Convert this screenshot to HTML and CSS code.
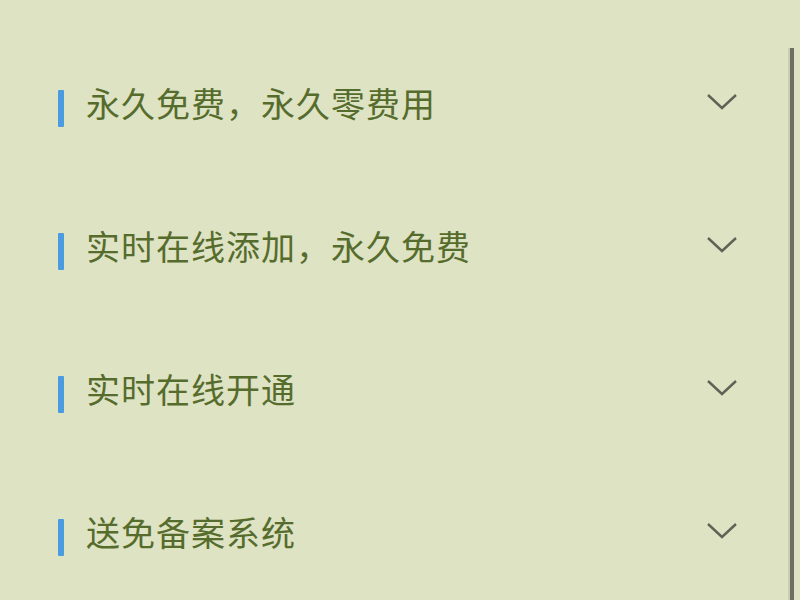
FILE: index.html
```html
<!DOCTYPE html>
<html lang="zh-CN">
<head>
    <meta charset="UTF-8">
    <meta name="viewport" content="width=device-width, initial-scale=1.0">
    <title>服务项目</title>
    <link rel="stylesheet" href="styles.css">
</head>
<body>
    <ul class="faq">
        <li class="item">
            <span class="mark"></span>
            <span class="title">永久免费，永久零费用</span>
            <svg class="arrow" viewBox="0 0 32 20"><path d="M2 3 L16 16 L30 3"/></svg>
        </li>
        <li class="item">
            <span class="mark"></span>
            <span class="title">实时在线添加，永久免费</span>
            <svg class="arrow" viewBox="0 0 32 20"><path d="M2 3 L16 16 L30 3"/></svg>
        </li>
        <li class="item">
            <span class="mark"></span>
            <span class="title">实时在线开通</span>
            <svg class="arrow" viewBox="0 0 32 20"><path d="M2 3 L16 16 L30 3"/></svg>
        </li>
        <li class="item">
            <span class="mark"></span>
            <span class="title">送免备案系统</span>
            <svg class="arrow" viewBox="0 0 32 20"><path d="M2 3 L16 16 L30 3"/></svg>
        </li>
    </ul>
    <div class="scrollbar"></div>
</body>
</html>
```

FILE: styles.css
```css
body {
    margin: 0;
    height: 600px;
    overflow: hidden;
    background-color: #dee3c4;
    font-family: "Noto Sans CJK SC", "Noto Sans", sans-serif;
}
.faq {
    list-style: none;
    margin: 0;
    padding: 33px 62px 0 58px;
}
.item {
    display: flex;
    align-items: center;
    height: 143px;
}
.mark {
    width: 6px;
    height: 37px;
    margin-top: 7px;
    background: #4b9be0;
    border-radius: 1px;
}
.title {
    flex: 1;
    margin-left: 22px;
    margin-top: -4px;
    font-size: 34px;
    color: #566c2c;
    letter-spacing: 1px;
}
.arrow {
    width: 32px;
    height: 20px;
    margin-top: -6px;
}
.arrow path {
    fill: none;
    stroke: #5e6356;
    stroke-width: 2.4;
}
.scrollbar {
    position: absolute;
    top: 48px;
    right: 6px;
    bottom: 0;
    width: 4px;
    background: #6b7062;
    border-left: 2px solid #c9cdb3;
}
```
